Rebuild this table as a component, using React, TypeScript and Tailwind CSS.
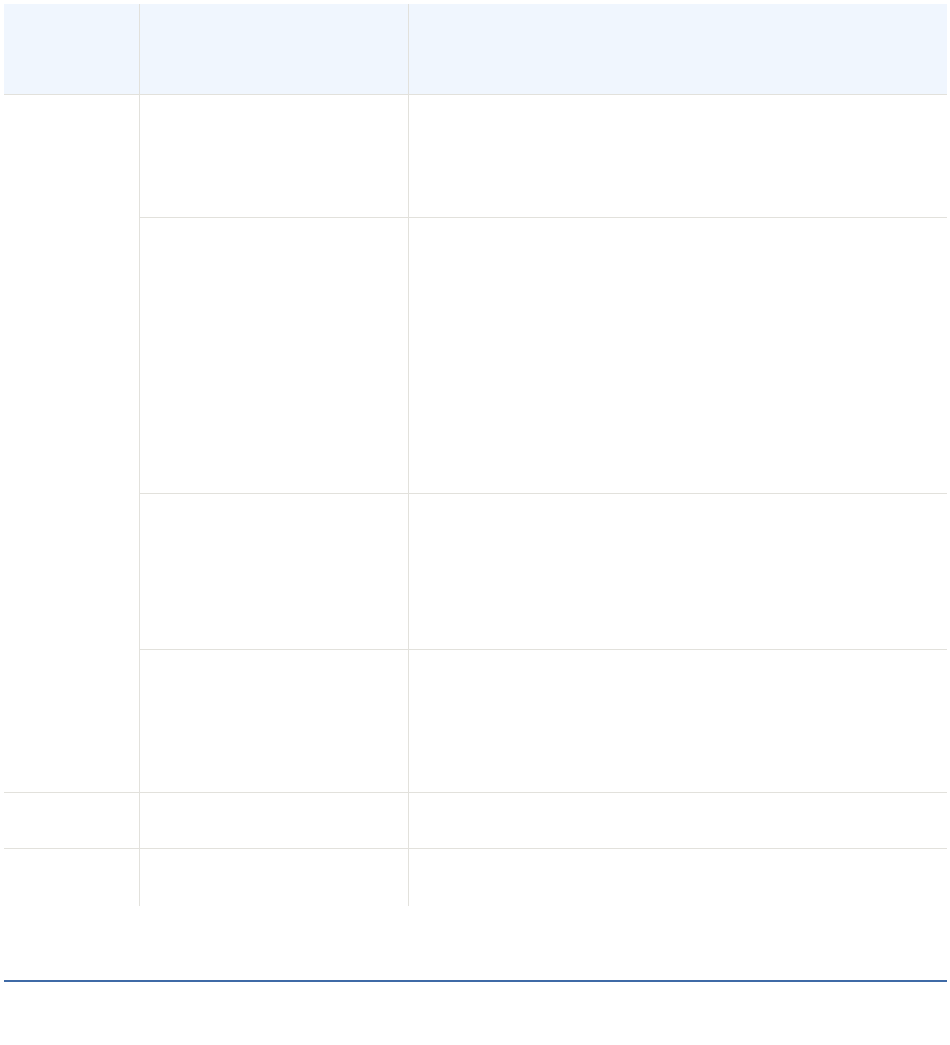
import React from "react";

export default function App() {
  const line = "border-[#e2e1dc]";
  return (
    <div className="min-h-[1045px] bg-white p-1 font-['Liberation_Sans',sans-serif]">
      <div className="grid w-[943px] grid-cols-[135px_269px_539px] grid-rows-[91px_123px_276px_156px_143px_56px_57px]">
        {/* header */}
        <div className={`border-b ${line} bg-[#f0f6fe]`}></div>
        <div className={`border-b border-l ${line} bg-[#f0f6fe]`}></div>
        <div className={`border-b border-l ${line} bg-[#f0f6fe]`}></div>

        {/* grouped rows */}
        <div className={`row-span-4 border-b ${line}`}></div>
        <div className={`border-b border-l ${line}`}></div>
        <div className={`border-b border-l ${line}`}></div>
        <div className={`border-b border-l ${line}`}></div>
        <div className={`border-b border-l ${line}`}></div>
        <div className={`border-b border-l ${line}`}></div>
        <div className={`border-b border-l ${line}`}></div>
        <div className={`border-b border-l ${line}`}></div>
        <div className={`border-b border-l ${line}`}></div>

        {/* single rows */}
        <div className={`border-b ${line}`}></div>
        <div className={`border-b border-l ${line}`}></div>
        <div className={`border-b border-l ${line}`}></div>

        <div></div>
        <div className={`border-l ${line}`}></div>
        <div className={`border-l ${line}`}></div>
      </div>
      <div className="mt-[74px] h-[2px] w-[943px] bg-[#3f6aa6]"></div>
    </div>
  );
}
